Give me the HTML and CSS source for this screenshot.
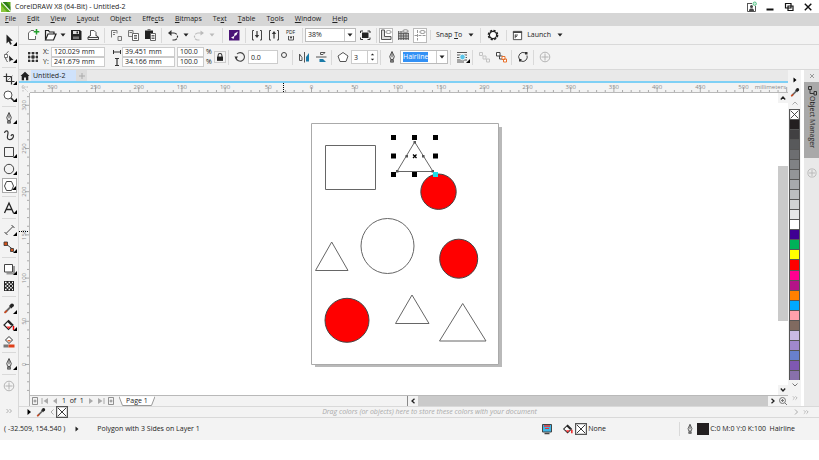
FILE: index.html
```html
<!DOCTYPE html>
<html lang="en">
<head>
  <meta charset="UTF-8">
  <meta name="viewport" content="width=device-width, initial-scale=1.0">
  <title>CorelDRAW X8 (64-Bit) - Untitled-2</title>
  <link rel="stylesheet" href="styles.css">
</head>
<body>
  <!-- Icon sprite -->
  <svg class="sprite" aria-hidden="true">
    <symbol id="i-caret" viewBox="0 0 6 4"><path d="M0.5 .5h5L3 3.5z" fill="currentColor"/></symbol>
    <symbol id="i-right" viewBox="0 0 4 6"><path d="M.5 .5v5L3.5 3z" fill="currentColor"/></symbol>
    <symbol id="i-plus" viewBox="0 0 14 14"><g fill="none" stroke="#b4b4b4"><circle cx="7" cy="7" r="4.8"/><path d="M7 3.500v7M3.500 7h7"/></g></symbol>
    <symbol id="i-more" viewBox="0 0 14 14"><path d="M4.500 5L6.500 7 4.500 9M7.500 5L9.500 7 7.500 9" fill="none" stroke="#b0b0b0"/></symbol>
    <symbol id="i-nocolor" viewBox="0 0 10 10"><path d="M.5 .5h9v9h-9z" fill="#fff" stroke="#555"/><path d="M1.500 1.500l7 7M8.500 1.500l-7 7" stroke="#333" stroke-width=".8"/></symbol>
    <symbol id="i-dropper" viewBox="0 0 14 14"><path d="M3 11.500L8.500 6" stroke="#666" stroke-width="1.800"/><path d="M2.500 12l2.500-2.500" stroke="#d0491d" stroke-width="1.600"/><path d="M7.500 4.500l2.500 2.500" stroke="#222" stroke-width="1.200"/><circle cx="10" cy="4.300" r="1.900" fill="#222"/></symbol>
    <symbol id="i-pen" viewBox="0 0 14 14"><path d="M7 1.500L4.700 6.500 5.700 9.500h2.600l1-3z" fill="#ddd" stroke="#444" stroke-width=".9"/><path d="M7 2v5" stroke="#444" stroke-width=".8"/><path d="M5.500 10.200h3v2h-3z" fill="#888" stroke="#444" stroke-width=".7"/></symbol>
    <symbol id="i-bucket" viewBox="0 0 14 14"><path d="M6.500 2.500L11 7 6.500 11.500 2 7z" fill="#fff" stroke="#222" stroke-width="1.200"/><path d="M4.500 8.500h4.500L6.500 11z" fill="#f33"/><path d="M6.500 2.500L11 7l-2 .5L5.500 4z" fill="#222"/><path d="M11.500 8v4" stroke="#e00" stroke-width="1.500"/></symbol>
  </svg>

  <div class="app">
    <header class="titlebar">
      <svg class="logo" viewBox="0 0 12 12"><path d="M1 1h9.500v10H1z" fill="#58a618"/><path d="M1 1l9.500 10V6.500L5 1z" fill="#fff"/><path d="M2.500 1L10.500 9.500V6L6.500 1z" fill="#2c7a1d"/><path d="M1 4l6 7H1z" fill="#8dc63f"/></svg>
      <h1>CorelDRAW X8 (64-Bit) - Untitled-2</h1>
      <div class="window-buttons">
        <button aria-label="Account"><svg viewBox="0 0 12 12"><path d="M2.500 2v8.500h8V5M2.500 2.500H7" fill="none" stroke="#555"/><path d="M4 10c0-2 1-2.500 2.500-2.500S9 8 9 10z" fill="#444"/><circle cx="6.500" cy="5.500" r="1.500" fill="#444"/><circle cx="9.700" cy="2.700" r="1.700" fill="#cfeedd" stroke="#3db874" stroke-width=".8"/></svg></button>
        <button aria-label="Minimize"><svg viewBox="0 0 12 12"><path d="M2.500 8.500h7" stroke="#111" stroke-width="2"/></svg></button>
        <button aria-label="Restore"><svg viewBox="0 0 12 12"><path d="M2.500 2.500h5.500v4.500H2.500zM5 5h5v4.500H5z" fill="#fff" stroke="#111" stroke-width="1.200"/></svg></button>
        <button aria-label="Close"><svg viewBox="0 0 12 12"><path d="M2.800 2.800l6.500 6.500M9.300 2.800L2.800 9.300" stroke="#111" stroke-width="1.400"/></svg></button>
      </div>
    </header>

    <nav class="menubar">
      <a href="#"><u>F</u>ile</a>
      <a href="#"><u>E</u>dit</a>
      <a href="#"><u>V</u>iew</a>
      <a href="#"><u>L</u>ayout</a>
      <a href="#">Ob<u>j</u>ect</a>
      <a href="#">Effe<u>c</u>ts</a>
      <a href="#"><u>B</u>itmaps</a>
      <a href="#">Te<u>x</u>t</a>
      <a href="#"><u>T</u>able</a>
      <a href="#">T<u>o</u>ols</a>
      <a href="#"><u>W</u>indow</a>
      <a href="#"><u>H</u>elp</a>
    </nav>

    <div class="main">
      <aside class="toolbox">
        <div class="grip grip-top"></div>
        <button class="tool flyout" aria-label="Pick"><svg viewBox="0 0 14 14"><path d="M4.500 1.500v9l2.200-2 1.500 3.300 1.600-.8-1.600-3.200h2.600z" fill="#222"/></svg></button>
        <button class="tool flyout" aria-label="Shape"><svg viewBox="0 0 14 14"><path d="M6.500 1.500C2.500 4 2.500 8 5.500 12" fill="none" stroke="#555"/><path d="M2.500 4.500h3v3h-3z" fill="#fff" stroke="#555" stroke-width=".8"/><path d="M7 5.500l4.500 4.500-2.500.2L7.500 12z" fill="#222"/></svg></button>
        <hr>
        <button class="tool flyout" aria-label="Crop"><svg viewBox="0 0 14 14"><path d="M4.500 1.500v8h8M1.500 4.500h8v8" fill="none" stroke="#333" stroke-width="1.200"/><path d="M10.500 3.500l-6 6" stroke="#666" stroke-width=".7"/></svg></button>
        <button class="tool flyout" aria-label="Zoom"><svg viewBox="0 0 14 14"><circle cx="6" cy="6" r="4" fill="#fff" stroke="#555"/><path d="M9 9l3.500 3.500" stroke="#333" stroke-width="1.600"/></svg></button>
        <hr>
        <button class="tool flyout" aria-label="Freehand"><svg><use href="#i-pen"/></svg></button>
        <button class="tool" aria-label="Artistic media"><svg viewBox="0 0 14 14"><path d="M2.500 5C3 2 6.500 2 6 5.500 5.500 8 4.500 11 7 11.500c3 .5 4.500-2 4.500-3.500S9.500 6 9 8" fill="none" stroke="#333" stroke-width="1.200"/></svg></button>
        <button class="tool flyout" aria-label="Rectangle"><svg viewBox="0 0 14 14"><path d="M2.500 2.500h9v9h-9z" fill="none" stroke="#444"/></svg></button>
        <button class="tool flyout" aria-label="Ellipse"><svg viewBox="0 0 14 14"><circle cx="7" cy="7" r="4.700" fill="none" stroke="#444"/></svg></button>
        <button class="tool flyout selected" aria-label="Polygon"><svg viewBox="0 0 14 14"><path d="M4.500 2.500h5L11.500 7l-2 4.500h-5L2.500 7z" fill="#fff" stroke="#444"/></svg></button>
        <hr>
        <button class="tool flyout" aria-label="Text"><svg viewBox="0 0 14 14"><path d="M2.500 12L7 2l4.500 10M4.300 8.500h5.400" fill="none" stroke="#222" stroke-width="1.300"/></svg></button>
        <hr>
        <button class="tool flyout" aria-label="Dimension"><svg viewBox="0 0 14 14"><path d="M4 10.500L11 3.500M9.500 2l3 3M2.500 9l3 3" stroke="#444"/></svg></button>
        <button class="tool flyout" aria-label="Connector"><svg viewBox="0 0 14 14"><path d="M3.500 3.500L11 9.500" stroke="#444"/><path d="M2 2h3.500v3.500H2zM8.500 8.500h3v3h-3z" fill="#d3531b" stroke="#333" stroke-width=".8"/></svg></button>
        <hr>
        <button class="tool flyout" aria-label="Drop shadow"><svg viewBox="0 0 14 14"><path d="M4.500 11.500h7.500V4" fill="none" stroke="#999" stroke-width="2"/><path d="M2.500 2.500h8v7.500h-8z" fill="#fff" stroke="#444"/></svg></button>
        <button class="tool" aria-label="Transparency"><svg viewBox="0 0 14 14"><path d="M2 2h10v10H2z" fill="#222"/><path d="M3 3.500h8M3 7h8M3 10.500h8" stroke="#fff" stroke-width="1.500" stroke-dasharray="1.500 2"/><path d="M4.700 5.200h6M4.700 8.800h6" stroke="#fff" stroke-width="1.500" stroke-dasharray="1.500 2"/></svg></button>
        <hr>
        <button class="tool flyout" aria-label="Color eyedropper"><svg><use href="#i-dropper"/></svg></button>
        <button class="tool flyout" aria-label="Interactive fill"><svg><use href="#i-bucket"/></svg></button>
        <button class="tool" aria-label="Smart fill"><svg viewBox="0 0 14 14"><path d="M7 1.500L10.500 5 7 8.500 3.500 5z" fill="#fff" stroke="#333"/><path d="M5 5h4L7 7z" fill="#e8622a"/><path d="M1.500 9.500h5v3h-5z" fill="#777"/><path d="M6.500 9.500h6v3h-6z" fill="#e0411b"/></svg></button>
        <hr>
        <button class="tool flyout" aria-label="Outline pen"><svg><use href="#i-pen"/></svg></button>
        <hr>
        <button class="tool" aria-label="Customize toolbox"><svg><use href="#i-plus"/></svg></button>
        <button class="tool last" aria-label="More tools"><svg><use href="#i-more"/></svg></button>
      </aside>

      <div class="workspace">
        <div class="toolbar standard">
          <div class="grip"></div>
          <div class="group">
            <button class="btn" aria-label="New"><svg viewBox="0 0 14 14"><path d="M8 2.500H5L2.500 5v6.500h7V8" fill="#fff" stroke="#666"/><path d="M10.500 1v5.500M7.700 3.700h5.600" stroke="#22a02c" stroke-width="1.500"/></svg></button>
            <button class="btn" aria-label="Open"><svg viewBox="0 0 14 14"><path d="M2.500 11.500v-9h3l1 1.500H11v2" fill="none" stroke="#222" stroke-width="1.200"/><path d="M2.500 12L5 6h8l-2.500 6z" fill="#fff" stroke="#222" stroke-width="1.200"/></svg></button>
            <button class="drop" aria-label="Open recent"><svg><use href="#i-caret"/></svg></button>
            <button class="btn" aria-label="Save"><svg viewBox="0 0 14 14"><path d="M2 2h9l1.500 1.500V12H2z" fill="#222"/><path d="M4 3h6v3H4z" fill="#ddd"/><path d="M4 8.500h6V11H4z" fill="#777"/><path d="M7.500 3.500h1.500v2H7.500z" fill="#222"/></svg></button>
            <button class="btn" aria-label="Print"><svg viewBox="0 0 14 14"><path d="M4.500 8V2.500H8L10 4.500V8" fill="#fff" stroke="#555"/><path d="M4.500 7.500L2 9v2.500h10.500V9L10 7.500M2 9.500h10" fill="none" stroke="#444"/></svg></button>
          </div>
          <div class="group">
            <button class="btn" aria-label="Cut"><svg viewBox="0 0 14 14"><path d="M2.500 9.500v-7H8v3M4 4.500h2.500M4 6.500h2" fill="none" stroke="#777"/><path d="M9 8.500h3.500v4H9z" fill="#eee" stroke="#777"/></svg></button>
            <button class="btn" aria-label="Copy"><svg viewBox="0 0 14 14"><path d="M2.500 2.500H7v6H2.500zM3.500 4.500H6" fill="#eee" stroke="#777"/><path d="M6.500 5.500h6v7h-6zM8 7.500h3M8 9h3M8 10.500h3" fill="#fff" stroke="#666"/></svg></button>
            <button class="btn" aria-label="Paste"><svg viewBox="0 0 14 14"><path d="M2 2.500h8V11H2z" fill="#222"/><path d="M4.500 1h3v2h-3z" fill="#777"/><path d="M7.500 5.500h5v7h-5zM8.500 7.500h3M8.500 9h3M8.500 10.500h3" fill="#fff" stroke="#666"/></svg></button>
          </div>
          <div class="group undo">
            <button class="btn" aria-label="Undo"><svg viewBox="0 0 14 14"><path d="M3 5h5a3.500 3.500 0 0 1 0 7H6.500" fill="none" stroke="#333" stroke-width="1.200" stroke-dasharray="8 1.500 2 1"/><path d="M5.500 2L2 5l3.500 3z" fill="#333"/></svg></button>
            <button class="drop" aria-label="Undo list"><svg><use href="#i-caret"/></svg></button>
            <button class="btn" aria-label="Redo" disabled><svg viewBox="0 0 14 14"><path d="M11 5H6a3.500 3.500 0 0 0 0 7h1.500" fill="none" stroke="#bbb" stroke-width="1.200" stroke-dasharray="8 1.500 2 1"/><path d="M8.500 2.500L12 5 8.500 7.500z" fill="#bbb"/></svg></button>
            <button class="drop" aria-label="Redo list" disabled><svg><use href="#i-caret"/></svg></button>
          </div>
          <div class="group">
            <button class="btn" aria-label="Search content"><svg viewBox="0 0 14 14"><path d="M2 2h10.500v10.500H2z" fill="#4b1577"/><path d="M4 9.500L7 8l.5-2.500L11 3.500 9.500 7 7.500 8l-1 3z" fill="#fff"/></svg></button>
          </div>
          <div class="group">
            <button class="btn" aria-label="Import"><svg viewBox="0 0 14 14"><path d="M4 2.500H2.500v9.500H4M10 2.500h1.500v9.500H10" fill="none" stroke="#444"/><path d="M7 3v5.500" stroke="#333" stroke-width="1.200"/><path d="M4.800 7h4.400L7 10z" fill="#333"/></svg></button>
            <button class="btn" aria-label="Export"><svg viewBox="0 0 14 14"><path d="M4 2.500H2.500v9.500H4M10 2.500h1.500v9.500H10" fill="none" stroke="#444"/><path d="M7 5v5.500" stroke="#333" stroke-width="1.200"/><path d="M4.800 6h4.400L7 3z" fill="#333"/></svg></button>
            <button class="btn pdf" aria-label="Publish to PDF"><span>PDF</span><svg viewBox="0 0 8 6"><path d="M1.500 1v4h5V1" fill="none" stroke="#555"/><path d="M2.500 1.500h3L4 4z" fill="#333"/></svg></button>
          </div>
          <div class="group">
            <span class="combo zoom">
              <select aria-label="Zoom level"><option>38%</option><option>100%</option></select>
              <svg><use href="#i-caret"/></svg>
            </span>
            <button class="btn" aria-label="Full screen"><svg viewBox="0 0 14 14"><path d="M4 4.500h6.500v5.500H4z" fill="#222"/><path d="M2.500 5V3H5M9.500 3H12v2M12 9.500v2H9.500M5 11.500H2.500v-2" fill="none" stroke="#333"/></svg></button>
          </div>
          <div class="group">
            <button class="btn boxed" aria-label="Show rulers"><svg viewBox="0 0 14 14"><path d="M2.500 2v9.500h9.500V8.500H5.500V2z" fill="#ddd" stroke="#555"/><ellipse cx="9.500" cy="4" rx="2.700" ry="1.500" fill="#fff" stroke="#777" stroke-width=".8"/></svg></button>
            <button class="btn wide" aria-label="Show grid"><svg viewBox="0 0 14 14"><path d="M2 3h10.500v9H2z" fill="#bbb"/><path d="M2.500 3v9M5 3v9M7.500 5v7M10 5v7M12.500 5v7M2 5.500h11M2 8h11M2 10.500h11" stroke="#555" stroke-width=".8"/><ellipse cx="9.500" cy="3" rx="2.700" ry="1.300" fill="#eee" stroke="#777" stroke-width=".8"/></svg></button>
            <button class="btn boxed" aria-label="Show guidelines"><svg viewBox="0 0 14 14"><path d="M4.500 2v10.500M1.500 7.500h11" stroke="#999" stroke-dasharray="3 1"/><ellipse cx="9.500" cy="4" rx="2.700" ry="1.500" fill="#fff" stroke="#777" stroke-width=".8"/></svg></button>
          </div>
          <div class="group">
            <button class="text-btn"><span>Snap <u>T</u>o</span> <svg class="caret"><use href="#i-caret"/></svg></button>
          </div>
          <div class="group">
            <button class="btn wide" aria-label="Options"><svg viewBox="0 0 14 14"><circle cx="7" cy="7" r="4.600" fill="none" stroke="#222" stroke-width="1.500" stroke-dasharray="2.200 1.400"/><circle cx="7" cy="7" r="3.600" fill="#fff" stroke="#222" stroke-width="1.200"/></svg></button>
          </div>
          <div class="group">
            <button class="text-btn"><svg class="launch" viewBox="0 0 12 12"><path d="M1.500 1.500h9v9h-9z" fill="#fff" stroke="#444"/><path d="M1 2.500h10" stroke="#444" stroke-width="1.500"/><path d="M3.500 5.500h3M3.500 7h2M3.500 5v4" stroke="#444"/></svg> <span>Launch</span> <svg class="caret"><use href="#i-caret"/></svg></button>
          </div>
        </div>

        <form class="toolbar property">
          <div class="grip"></div>
          <div class="group">
            <button type="button" class="btn" aria-label="Object origin"><svg viewBox="0 0 14 14"><path d="M3 3h8v8H3zM7 3v8M3 7h8" fill="none" stroke="#444" stroke-width=".8"/><path d="M2 2h2v2H2zM6 2h2v2H6zM10 2h2v2h-2zM2 6h2v2H2zM10 6h2v2h-2zM2 10h2v2H2zM6 10h2v2H6zM10 10h2v2h-2zM5.500 5.500h3v3h-3z" fill="#333"/></svg></button>
            <div class="fields">
              <label for="pos-x">X:</label><input id="pos-x" value="120.029 mm">
              <label for="pos-y">Y:</label><input id="pos-y" value="241.679 mm">
            </div>
            <div class="fields size">
              <label for="width" aria-label="Width"><svg viewBox="0 0 10 8"><path d="M1.500 2v4M8.500 2v4M1.500 4h7" stroke="#333"/></svg></label><input id="width" value="39.451 mm">
              <label for="height" aria-label="Height"><svg viewBox="0 0 10 8"><path d="M3 .5h4M3 7.500h4M5 .5v7" stroke="#333" stroke-width="1.200"/></svg></label><input id="height" value="34.166 mm">
            </div>
            <div class="fields scale">
              <input id="scale-x" value="100.0"><label for="scale-x">%</label>
              <input id="scale-y" value="100.0"><label for="scale-y">%</label>
            </div>
            <button type="button" class="btn lock" aria-label="Lock ratio"><svg viewBox="0 0 14 14"><path d="M4.800 7V5a2.200 2.200 0 0 1 4.400 0v2" fill="none" stroke="#333" stroke-width="1.200"/><path d="M3.500 6.500h7v5h-7z" fill="#222"/></svg></button>
          </div>
          <div class="group">
            <label class="btn" for="angle" aria-label="Rotation"><svg viewBox="0 0 14 14"><path d="M4 4a4.300 4.300 0 1 1-1 4" fill="none" stroke="#444" stroke-width="1.100"/><path d="M1.500 6.500h3.500L3 9.500z" fill="#333"/></svg></label>
            <input id="angle" class="field angle" value="0.0">
            <svg class="degree" viewBox="0 0 12 14"><circle cx="6" cy="5" r="2.500" fill="none" stroke="#444"/></svg>
          </div>
          <div class="group">
            <button type="button" class="btn" aria-label="Mirror horizontally"><svg viewBox="0 0 14 14"><path d="M2.500 4v6.500h2.500V7.500L2.500 4M7.500 2v10.500" fill="none" stroke="#555"/><path d="M12 3v8.500H9V7z" fill="#1b7ba8"/></svg></button>
            <button type="button" class="btn" aria-label="Mirror vertically"><svg viewBox="0 0 14 14"><path d="M11 2.500H6.500v2H9zM2 7h10.500" fill="none" stroke="#555"/><path d="M12 12H5.500V9H9z" fill="#1b7ba8"/></svg></button>
          </div>
          <div class="group">
            <label class="btn" for="sides" aria-label="Sides"><svg viewBox="0 0 14 14"><path d="M7 2.500l5 3.500-2 5.500H4L2 6z" fill="#fff" stroke="#555"/></svg></label>
            <span class="spin"><input id="sides" type="number" class="field" value="3"><svg viewBox="0 0 8 14"><path d="M2 5h4L4 2.800zM2 9h4L4 11.200z" fill="#222"/></svg></span>
          </div>
          <div class="group">
            <label class="btn" for="outline" aria-label="Outline width"><svg><use href="#i-pen"/></svg></label>
            <span class="combo outline">
              <input id="outline" value="Hairline">
              <svg><use href="#i-caret"/></svg>
            </span>
          </div>
          <div class="group">
            <button type="button" class="btn flyout" aria-label="Wrap text"><svg viewBox="0 0 14 14"><path d="M2 2.500h10M2 5h10M2 7.500h10M2 10h10M2 12h7" stroke="#555"/><circle cx="7.500" cy="7" r="2.800" fill="#5cc5e8" stroke="#fff" stroke-width=".8"/></svg></button>
          </div>
          <div class="group">
            <button type="button" class="btn" aria-label="To front" disabled><svg viewBox="0 0 14 14"><path d="M2.500 2.500h3v3h-3zM6 6h3v3H6zM9.500 9h3v3h-3z" fill="#f3f3f3" stroke="#c4c4c4"/></svg></button>
            <button type="button" class="btn" aria-label="To back"><svg viewBox="0 0 14 14"><path d="M2.500 2.500h3.500v3.500H2.500zM5.500 6h3v3h-3z" fill="#fff" stroke="#444"/><path d="M8 6.500h3v3H8zM9.500 9h3v3h-3z" fill="#fff" stroke="#e8722c"/></svg></button>
          </div>
          <div class="group">
            <button type="button" class="btn" aria-label="Convert to curves"><svg viewBox="0 0 14 14"><path d="M9 2.800A4.500 4.500 0 0 0 3.500 9.500M5.500 11.300A4.500 4.500 0 0 0 11 5.500" fill="none" stroke="#444"/><path d="M9 2h2.500v2.500H9zM3 9h2.500v2.500H3z" fill="#333"/></svg></button>
          </div>
          <div class="group">
            <button type="button" class="btn" aria-label="Customize toolbar"><svg><use href="#i-plus"/></svg></button>
          </div>
        </form>

        <div class="stage">
          <section class="document">
            <div class="tabs">
              <button class="home" aria-label="Welcome screen"><svg viewBox="0 0 10 10"><path d="M5 .8L.5 5h1.200v4.200H4V6.500h2v2.700h2.300V5h1.200z" fill="#222"/></svg></button>
              <button class="tab">Untitled-2</button>
              <button class="add" aria-label="New document"><svg viewBox="0 0 10 10"><path d="M5 2v6M2 5h6" stroke="#aaa"/></svg></button>
            </div>
            <div class="view">
              <svg class="corner" viewBox="0 0 11 10"><path d="M4 2v7M2.500 4h7M4.500 4.500l4 4" stroke="#aaa" stroke-width=".8" stroke-dasharray="1.500 1"/></svg>
              <svg class="ruler ruler-x" id="ruler-x"></svg>
              <svg class="ruler ruler-y" id="ruler-y"></svg>
              <svg class="canvas">
                <path class="page-shadow" d="M4 34H191V274H4z"/>
                <path class="page" d="M.5 .5H187.500V241.500H.5z" transform="translate(281 30)"/>
                <g class="outline-shape">
                  <path d="M295.500 52.500h50v44h-50z"/>
                  <ellipse cx="357.500" cy="153" rx="26.500" ry="27.500"/>
                  <path d="M301.700 149L318 177.500H285.500z"/>
                  <path d="M382 202L399 230.500H365.500z"/>
                  <path d="M432.700 210.500L456 248H409.500z"/>
                </g>
                <g class="red-shape">
                  <circle cx="408.500" cy="98.700" r="17.700"/>
                  <ellipse cx="428.700" cy="165.700" rx="19" ry="19.500"/>
                  <circle cx="317" cy="227.300" r="22"/>
                </g>
                <path class="outline-shape" d="M384.700 49L403 78.500H367z"/>
                <path class="nodes" d="M383.500 48h2.500v2.500h-2.500zM375.500 62h2.500v2.500h-2.500zM392 62h2.500v2.500H392zM366 77h2.500v2.500H366zM401.500 77h2.500v2.500h-2.500z"/>
                <path d="M383 61.500l3.500 3.500M386.500 61.500L383 65" stroke="#000" stroke-width="1.300"/>
                <path class="handles" d="M361 42h5v5h-5zM382 42h5v5h-5zM403 42h5v5h-5zM361 60.500h5v5h-5zM403 60.500h5v5h-5zM361 79h5v5h-5zM382 79h5v5h-5z"/>
                <path d="M403 79h5v5h-5z" fill="#1be0e6"/>
              </svg>
              <div class="scroll-y">
                <button aria-label="Scroll up"><svg viewBox="0 0 10 10"><path d="M2.800 6.500L5 4l2.200 2.500" fill="none" stroke="#222" stroke-width="1.300"/></svg></button>
                <div class="track"><div class="thumb"></div></div>
                <button aria-label="Scroll down"><svg viewBox="0 0 10 10"><path d="M2.800 3.500L5 6l2.200-2.500" fill="none" stroke="#222" stroke-width="1.300"/></svg></button>
              </div>
              <div class="page-bar">
                <div class="pages">
                  <button aria-label="Add page before"><svg viewBox="0 0 10 10"><path d="M2.500 1.500h5v7h-5zM3.500 5h3M5 3.500v3" fill="none" stroke="#777" stroke-width=".8"/></svg></button>
                  <button aria-label="First page"><svg viewBox="0 0 10 10"><path d="M2 2v6" stroke="#aaa"/><path d="M8 2v6L3.500 5z" fill="#aaa"/></svg></button>
                  <button aria-label="Previous page"><svg viewBox="0 0 10 10"><path d="M7 2v6L3 5z" fill="#aaa"/></svg></button>
                  <span>1&nbsp; of &nbsp;1</span>
                  <button aria-label="Next page"><svg viewBox="0 0 10 10"><path d="M3 2v6l4-3z" fill="#aaa"/></svg></button>
                  <button aria-label="Last page"><svg viewBox="0 0 10 10"><path d="M8 2v6" stroke="#aaa"/><path d="M2 2v6l4.500-3z" fill="#aaa"/></svg></button>
                  <button aria-label="Add page after"><svg viewBox="0 0 10 10"><path d="M2.500 1.500h5v7h-5zM3.500 5h3M5 3.500v3" fill="none" stroke="#777" stroke-width=".8"/></svg></button>
                </div>
                <button class="page-tab"><svg viewBox="0 0 36 10" preserveAspectRatio="none"><path d="M0 .5L3.500 9.500H32.500L36 .5" fill="#fff" stroke="#999"/></svg><span>Page 1</span></button>
                <div class="splitter"></div>
                <div class="scroll-x">
                  <button aria-label="Scroll left"><svg viewBox="0 0 10 10"><path d="M6.500 2.800L4 5l2.500 2.200" fill="none" stroke="#222" stroke-width="1.300"/></svg></button>
                  <div class="thumb"></div>
                  <button aria-label="Scroll right"><svg viewBox="0 0 10 10"><path d="M3.500 2.800L6 5 3.500 7.200" fill="none" stroke="#222" stroke-width="1.300"/></svg></button>
                  <button aria-label="Navigator"><svg viewBox="0 0 10 10"><circle cx="4.500" cy="4.500" r="3" fill="#eee" stroke="#777"/><path d="M3 4.500h3M4.500 3v3M7 7l2 2" stroke="#777"/></svg></button>
                </div>
              </div>
            </div>
          </section>

          <aside class="palette">
            <div class="grip grip-top"></div>
            <button aria-label="Palette menu"><svg viewBox="0 0 12 12"><path d="M4.500 3.500v5L7.500 6z" fill="#000"/></svg></button>
            <button aria-label="Palette eyedropper"><svg><use href="#i-dropper"/></svg></button>
            <button aria-label="Scroll palette up"><svg viewBox="0 0 12 12"><path d="M3.500 6.500L6 4l2.500 2.500" fill="none" stroke="#aaa"/></svg></button>
            <div class="swatches" id="swatches"></div>
            <button aria-label="Scroll palette down"><svg viewBox="0 0 12 12"><path d="M3.500 3.500L6 6l2.500-2.500" fill="none" stroke="#777"/></svg></button>
            <button aria-label="Expand palette"><svg><use href="#i-more"/></svg></button>
          </aside>

          <aside class="docker">
            <button class="docker-close" aria-label="Close docker"><svg viewBox="0 0 12 12"><path d="M4 4l4 4M8 4L4 8" stroke="#999"/></svg></button>
            <button class="docker-tab"><svg viewBox="0 0 12 12"><path d="M2.500 2.500h3v3h-3zM4 5.500v4h4M8 7.500h2.500V11H8z" fill="none" stroke="#333"/></svg><span>Object Manager</span></button>
            <button aria-label="Customize dockers"><svg><use href="#i-plus"/></svg></button>
          </aside>
        </div>

        <div class="doc-palette">
          <div class="grip"></div>
          <button aria-label="Document palette menu"><svg viewBox="0 0 12 12"><path d="M4.500 3v6L8 6z" fill="#000"/></svg></button>
          <button aria-label="Document palette eyedropper"><svg><use href="#i-dropper"/></svg></button>
          <button class="narrow" aria-label="Scroll left"><svg viewBox="0 0 12 12"><path d="M7.500 3.500L5 6l2.500 2.500" fill="none" stroke="#aaa"/></svg></button>
          <button aria-label="No color"><svg><use href="#i-nocolor"/></svg></button>
          <p>Drag colors (or objects) here to store these colors with your document</p>
          <button class="narrow" aria-label="Scroll right"><svg viewBox="0 0 12 12"><path d="M5 3.500L7.500 6 5 8.500" fill="none" stroke="#aaa"/></svg></button>
          <button aria-label="More colors"><svg><use href="#i-more"/></svg></button>
        </div>
      </div>
    </div>

    <footer class="statusbar">
      <span class="coords">( -32.509, 154.540 )</span>
      <svg class="arrow"><use href="#i-right"/></svg>
      <span class="selection">Polygon with 3 Sides on Layer 1</span>
      <div class="indicators">
        <svg class="icon" viewBox="0 0 12 12"><path d="M1.500 1.500h9v7.500h-9z" fill="#3fb5e5" stroke="#444"/><path d="M3 3h6" stroke="#e33" stroke-width="1.500"/><path d="M4 5.500h4" stroke="#e33"/><path d="M3.500 10.500h5" stroke="#444" stroke-width="1.500"/></svg>
        <span class="fill"><svg class="icon"><use href="#i-bucket"/></svg><svg class="icon"><use href="#i-nocolor"/></svg> None</span>
        <span class="stroke"><svg class="icon"><use href="#i-pen"/></svg><i class="chip"></i> C:0 M:0 Y:0 K:100 &nbsp;Hairline</span>
      </div>
    </footer>
  </div>
  <script src="app.js"></script>
</body>
</html>
```
FILE: styles.css
```css
:root {
  --bar: #f3f3f3;
  --menu: #d6d6d6;
  --line: #d9d9d9;
  --border: #b9b9b9;
  --text: #222;
  --muted: #8a8a8a;
  --blue: #7fd0f5;
}

* {
  margin: 0;
  padding: 0;
  box-sizing: border-box;
}

body {
  font: 7px/10px "Open Sans", "Noto Sans", sans-serif;
  color: var(--text);
  background: #fff;
}

button,
input,
select {
  font: inherit;
  color: inherit;
  background: none;
  border: 0;
  border-radius: 0;
  outline: 0;
}

button {
  display: flex;
  align-items: center;
  justify-content: center;
}

svg {
  display: block;
  flex: none;
}

.sprite {
  position: absolute;
  width: 0;
  height: 0;
}

.app {
  display: flex;
  flex-direction: column;
  height: 100vh;
  padding-bottom: 20px;
}

/* Title and menus */
.titlebar {
  display: flex;
  align-items: center;
  gap: 3px;
  height: 13px;
  flex: none;
  padding-right: 5px;
}

.titlebar h1 {
  font-size: 7px;
  font-weight: 400;
}

.logo {
  width: 12px;
  height: 12px;
}

.window-buttons {
  display: flex;
  gap: 7px;
  margin-left: auto;
}

.window-buttons svg {
  width: 12px;
  height: 12px;
}

.menubar {
  display: flex;
  gap: 11px;
  height: 13px;
  flex: none;
  padding: 1px 5px;
  background: var(--menu);
}

.menubar a {
  color: inherit;
  text-decoration: none;
}

/* Main area */
.main {
  display: flex;
  flex: 1;
  min-height: 0;
}

.toolbox {
  display: flex;
  flex-direction: column;
  align-items: center;
  width: 19px;
  flex: none;
  padding-top: 1px;
  background: var(--bar);
  border-right: 1px solid var(--line);
}

.toolbox hr {
  width: 14px;
  flex: none;
  margin: 2px 0;
  border: 0;
  border-top: 1px solid var(--line);
}

.tool {
  position: relative;
  width: 15px;
  height: 17px;
  flex: none;
}

.tool svg,
.btn svg {
  width: 14px;
  height: 14px;
}

.tool.selected {
  height: 15px;
  margin: 1px 0;
  border: 1px solid #aaa;
  background: #fff;
}

.tool.last {
  margin-top: auto;
  height: 14px;
}

.flyout {
  position: relative;
}

.flyout::after {
  content: "";
  position: absolute;
  right: 0;
  bottom: 2px;
  border: 2px solid #000;
  border-top-color: transparent;
  border-left-color: transparent;
}

.grip {
  width: 4px;
  height: 80%;
  flex: none;
  background: radial-gradient(circle, #c4c4c4 30%, transparent 40%) 0 0 / 2px 2px;
}

.grip-top {
  width: 12px;
  height: 4px;
}

.workspace {
  display: flex;
  flex-direction: column;
  flex: 1;
  min-width: 0;
}

/* Toolbars */
.toolbar {
  display: flex;
  align-items: center;
  flex: none;
  background: var(--bar);
  border-bottom: 1px solid var(--line);
}

.standard {
  height: 19px;
}

.property {
  height: 25px;
}

.group {
  display: flex;
  align-items: center;
  padding: 0 3px 0 1px;
}

.group + .group {
  padding-left: 2px;
  border-left: 1px solid var(--line);
}

.property .group {
  padding-right: 2px;
}

.btn {
  width: 17px;
  height: 15px;
  display: flex;
  align-items: center;
  justify-content: center;
  flex: none;
}

.btn.boxed {
  width: 14px;
  background: #fff;
  border: 1px solid #bbb;
}

.btn.wide {
  width: 20px;
}

.btn.pdf {
  flex-direction: column;
  font-size: 5px;
  line-height: 5px;
}

.btn.pdf svg {
  width: 8px;
  height: 6px;
}

.drop {
  width: 9px;
  height: 15px;
}

.drop svg,
.caret,
.combo svg {
  width: 6px;
  height: 4px;
}

.drop:disabled {
  color: #bbb;
}

.undo {
  padding-right: 6px;
}

.text-btn {
  gap: 4px;
  padding: 0 3px;
}

.caret {
  margin-left: 2px;
}

.launch {
  width: 11px;
  height: 11px;
}

.combo {
  position: relative;
  display: flex;
  height: 14px;
  background: #fff;
  border: 1px solid #bbb;
}

.combo select,
.combo input {
  width: 100%;
  padding: 0 12px 0 2px;
  appearance: none;
}

.combo svg {
  position: absolute;
  right: 2px;
  top: 4px;
}

.combo::after {
  content: "";
  position: absolute;
  right: 10px;
  height: 100%;
  border-left: 1px solid #ccc;
}

.combo.zoom {
  width: 51px;
}

.combo.outline {
  width: 48px;
}

.outline input::selection {
  color: #fff;
  background: #3391f5;
}

.fields {
  display: grid;
  grid-template-columns: 8px 54px;
  align-items: center;
  margin-left: 2px;
}

.fields.size {
  grid-template-columns: 10px 53px;
  margin-left: 7px;
}

.fields.scale {
  grid-template-columns: 27px 8px;
  column-gap: 2px;
  margin-left: 2px;
}

.fields svg {
  width: 10px;
  height: 8px;
}

.fields input,
.field {
  width: 100%;
  height: 10px;
  padding: 0 2px;
  background: #fff;
  border: 1px solid #ccc;
}

.field {
  height: 14px;
}

.btn.lock {
  width: 12px;
  height: 12px;
  border: 1px solid #ccc;
}

.lock svg {
  width: 12px;
  height: 12px;
}

.field.angle {
  width: 30px;
}

.degree {
  width: 12px;
  height: 14px;
}

.spin {
  display: flex;
  width: 27px;
  height: 14px;
  background: #fff;
  border: 1px solid #ccc;
}

.spin .field {
  flex: 1;
  width: 0;
  min-width: 0;
  height: 100%;
  border-width: 0 1px 0 0;
  appearance: textfield;
}

.spin .field::-webkit-inner-spin-button {
  appearance: none;
  margin: 0;
}

.spin svg {
  width: 9px;
  height: 12px;
}

/* Document */
.stage {
  display: flex;
  flex: 1;
  min-height: 0;
  background: #e9e9e9;
}

.document {
  display: flex;
  flex-direction: column;
  flex: 1;
  min-width: 0;
}

.tabs {
  display: flex;
  align-items: center;
  height: 13px;
  flex: none;
  border-bottom: 2px solid var(--blue);
}

.home {
  width: 12px;
}

.home svg,
.add svg {
  width: 10px;
  height: 10px;
}

.tab {
  height: 11px;
  padding: 0 11px 0 2px;
  background: #cfe2fb;
}

.add {
  width: 11px;
  height: 11px;
  background: #dcdcdc;
}

.view {
  display: grid;
  grid-template: 10px 1fr 11px / 11px 1fr 10px;
  flex: 1;
  min-height: 0;
  background: var(--bar);
}

.corner,
.ruler {
  width: 100%;
  height: 100%;
}

.ruler-x {
  grid-column: 2 / 4;
  border-bottom: 1px solid var(--border);
}

.ruler-y {
  grid-row: 2 / 4;
  border-right: 1px solid var(--border);
}

.ruler line {
  stroke: #aaa;
}

.ruler .pointer {
  stroke: #000;
  stroke-dasharray: 1 1;
}

.ruler text {
  font-size: 6px;
  fill: var(--muted);
}

.canvas {
  width: 100%;
  height: 100%;
  background: #fff;
}

.page-shadow {
  fill: #b9b9b9;
  transform: translate(281px, 0);
}

.page {
  fill: #fff;
  stroke: #aaa;
}

.outline-shape {
  fill: none;
  stroke: #666;
}

.red-shape {
  fill: #f00;
  stroke: #444;
}

.nodes {
  fill: #555;
}

.scroll-y {
  display: flex;
  flex-direction: column;
  background: #fff;
}

.scroll-y button,
.scroll-x button {
  width: 10px;
  height: 10px;
  background: var(--bar);
}

.track {
  flex: 1;
  display: grid;
  grid-template-rows: 63fr 155fr 64fr;
}

.track .thumb {
  grid-row: 2;
}

.thumb {
  background: #cacaca;
}

.scroll-y svg,
.scroll-x svg,
.pages svg {
  width: 10px;
  height: 10px;
}

.page-bar {
  grid-column: 2 / 4;
  display: grid;
  grid-template-columns: auto auto 2fr 3fr;
  border-top: 1px solid var(--border);
}

.pages {
  display: flex;
  align-items: center;
  padding-right: 3px;
}

.pages span {
  padding: 0 2px;
}

.page-tab {
  position: relative;
  width: 36px;
}

.page-tab svg {
  position: absolute;
  inset: 0;
  width: 100%;
  height: 100%;
}

.page-tab span {
  position: relative;
}

.splitter {
  border-right: 1px solid #888;
}

.scroll-x {
  display: flex;
}

.scroll-x .thumb {
  flex: 1;
}

/* Right side */
.palette {
  display: flex;
  flex-direction: column;
  align-items: center;
  width: 13px;
  flex: none;
  padding-bottom: 2px;
  background: var(--bar);
}

.palette button,
.docker button {
  width: 12px;
  height: 12px;
  flex: none;
}

.palette svg,
.doc-palette svg {
  width: 12px;
  height: 12px;
}

.swatches {
  display: flex;
  flex-direction: column;
  flex: 1;
  width: 11px;
  min-height: 0;
  background: #555;
}

.palette .swatches button {
  width: 100%;
  height: auto;
  flex: 1;
  min-height: 0;
  border: 1px solid #555;
  border-bottom: 0;
  background: #fff;
}

.palette .swatches button:first-child {
  border: 0;
}

.palette .swatches svg {
  width: 11px;
  height: 11px;
}

.docker {
  display: flex;
  flex-direction: column;
  align-items: center;
  width: 18px;
  flex: none;
  border-left: 3px solid #fff;
}

.docker svg {
  width: 12px;
  height: 12px;
}

.docker button.docker-tab {
  flex-direction: column;
  justify-content: flex-start;
  width: 100%;
  height: 76px;
  margin-bottom: 9px;
  padding-top: 2px;
  background: #a9a9a9;
}

.docker-tab span {
  writing-mode: vertical-rl;
}

.doc-palette {
  display: flex;
  align-items: center;
  height: 12px;
  flex: none;
  padding-right: 7px;
  background: var(--bar);
  border-top: 1px solid var(--line);
  border-bottom: 1px solid var(--line);
}

.doc-palette button {
  width: 12px;
  height: 10px;
}

.doc-palette .narrow {
  width: 9px;
}

.doc-palette p {
  flex: 1;
  font-style: italic;
  text-align: center;
  color: #aaa;
}

/* Status bar */
.statusbar {
  display: flex;
  align-items: center;
  height: 22px;
  flex: none;
  padding: 0 24px 0 4px;
  background: var(--bar);
}

.arrow {
  width: 4px;
  height: 6px;
  margin: 0 18px 0 10px;
}

.indicators {
  display: flex;
  align-items: center;
  margin-left: auto;
}

.indicators span {
  display: flex;
  align-items: center;
  gap: 1px;
}

.icon {
  width: 12px;
  height: 12px;
}

.indicators .fill {
  width: 118px;
  height: 14px;
  margin: 0 4px 0 9px;
  border-right: 1px solid var(--line);
}

.chip {
  width: 12px;
  height: 12px;
  background: #231f20;
}
```
FILE: app.js
```js
const SVG_NS = 'http://www.w3.org/2000/svg';
const STEP = 43.2; // pixels per 50 mm

function add(parent, name, attrs, text) {
  const el = document.createElementNS(SVG_NS, name);
  for (const key in attrs) el.setAttribute(key, attrs[key]);
  if (text !== undefined) el.textContent = text;
  parent.appendChild(el);
  return el;
}

// Horizontal ruler, zero at the left edge of the page
const rulerX = document.getElementById('ruler-x');
for (let i = -32; i <= 55; i++) {
  const x = 281.5 + i * STEP / 5;
  const major = i % 5 === 0;
  add(rulerX, 'line', { x1: x, x2: x, y1: major ? 4 : 7, y2: 9 });
  if (major && i <= 50) add(rulerX, 'text', { x: x, y: 6, 'text-anchor': 'middle' }, Math.abs(i * 10));
}
add(rulerX, 'text', { x: 756, y: 6, 'text-anchor': 'end' }, 'millimeters');
add(rulerX, 'line', { x1: 253.5, x2: 253.5, y1: 0, y2: 9, class: 'pointer' });

// Vertical ruler, zero at the bottom edge of the page
const rulerY = document.getElementById('ruler-y');
for (let i = -3; i <= 31; i++) {
  const y = 271.5 - i * STEP / 5;
  const major = i % 5 === 0;
  add(rulerY, 'line', { x1: major ? 6 : 8, x2: 10, y1: y, y2: y });
  if (major) add(rulerY, 'text', { transform: `translate(7 ${y}) rotate(-90)`, 'text-anchor': 'middle' }, Math.abs(i * 10));
}
add(rulerY, 'line', { x1: 0, x2: 10, y1: 138.5, y2: 138.5, class: 'pointer' });

// Default CMYK palette
const colors = [
  '#231f20', '#414042', '#58595b', '#6d6e71', '#808285', '#939598', '#a7a9ac',
  '#bcbec0', '#d1d3d4', '#e6e7e8', '#ffffff', '#3f0092', '#00b259', '#ffff00',
  '#ff0000', '#ff0090', '#b41488', '#ff8000', '#00a8ff', '#ffa0aa', '#806a60',
  '#c8bae4', '#a088cc', '#6880cc', '#7f58b2', '#8870aa'
];
const swatches = document.getElementById('swatches');
swatches.innerHTML = '<button aria-label="No color"><svg><use href="#i-nocolor"/></svg></button>';
colors.forEach(color => {
  const button = document.createElement('button');
  button.style.background = color;
  button.setAttribute('aria-label', color);
  swatches.appendChild(button);
});

document.getElementById('outline').select();
```
